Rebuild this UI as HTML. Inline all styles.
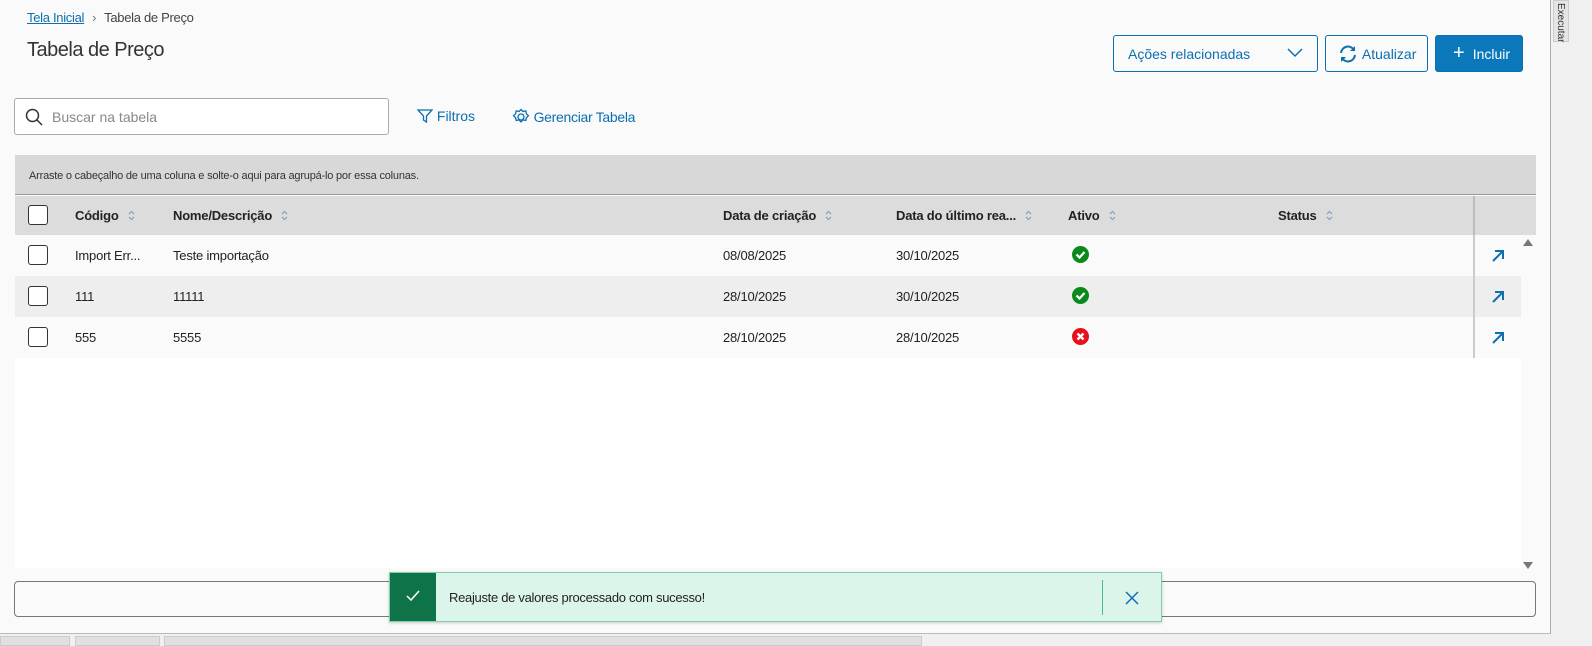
<!DOCTYPE html><html><head><meta charset="utf-8"><style>
*{box-sizing:border-box;margin:0;padding:0}
body{width:1592px;height:646px;overflow:hidden;background:#f0f0f0;font-family:"Liberation Sans",sans-serif;color:#222;position:relative}
.main{position:absolute;left:0;top:0;width:1551px;height:634px;background:#fafafa;border-right:1px solid #aaa;border-bottom:1px solid #bbb}
.abs{position:absolute}
.btn{position:absolute;top:35px;height:37px;border:1px solid #0c6fb1;border-radius:3px;color:#0c6fb1;font-size:14px;display:flex;align-items:center}
.th{position:absolute;top:208px;font-weight:bold;font-size:13px;color:#222;letter-spacing:-0.2px}
.th svg{margin-left:9px;vertical-align:-1px}
.row{position:absolute;left:15px;width:1506px;height:41px;font-size:13px;letter-spacing:-0.2px}
.row span{position:absolute;top:13px}
.cb{position:absolute;left:13px;top:10px;width:20px;height:20px;border:1.5px solid #333;border-radius:3px;background:#fff}
.act{position:absolute;left:1458px;top:0;width:48px;height:41px;border-left:2px solid #ccc}
</style></head><body>
<div class="main">
<div class="abs" style="left:27px;top:10px;font-size:13px;letter-spacing:-0.3px"><span style="color:#0c6fb1;text-decoration:underline">Tela Inicial</span><span style="color:#777;margin:0 8px">›</span><span style="color:#444">Tabela de Preço</span></div>
<div class="abs" style="left:27px;top:39px;font-size:20px;color:#333;letter-spacing:-0.5px">Tabela de Preço</div>
<div class="btn" style="left:1113px;width:205px;padding-left:14px">Ações relacionadas<svg style="position:absolute;right:14px;top:12px" width="16" height="10" viewBox="0 0 16 10"><path d="M1 1l7 7 7-7" fill="none" stroke="#0c6fb1" stroke-width="1.5"/></svg></div>
<div class="btn" style="left:1325px;width:103px;padding-left:12px"><svg width="20" height="18" viewBox="0 0 20 18"><path d="M3 8a7 7 0 0 1 13-3M17 10a7 7 0 0 1-13 3" fill="none" stroke="#0c6fb1" stroke-width="2"/><path d="M17 1v5h-5M3 17v-5h5" fill="#0c6fb1"/></svg>&nbsp;Atualizar</div>
<div class="btn" style="left:1435px;width:88px;background:#0c78bc;color:#fff;padding-left:17px"><span style="font-size:20px;margin-right:8px">+</span>Incluir</div>
<div class="abs" style="left:14px;top:98px;width:375px;height:37px;border:1px solid #aaa;border-radius:3px;background:#fff"><svg class="abs" style="left:10px;top:9px" width="18" height="18" viewBox="0 0 18 18"><circle cx="7.5" cy="7.5" r="6" fill="none" stroke="#333" stroke-width="1.5"/><path d="M12 12l5 5" stroke="#333" stroke-width="1.5"/></svg><span class="abs" style="left:37px;top:10px;font-size:14px;color:#888">Buscar na tabela</span></div>
<div class="abs" style="left:417px;top:108px;font-size:14px;color:#0c6fb1"><svg width="16" height="16" viewBox="0 0 16 16" style="vertical-align:-3px"><path d="M1 2h14l-5.5 6v6l-3-2v-4z" fill="none" stroke="#0c6fb1" stroke-width="1.3"/></svg> Filtros</div>
<div class="abs" style="left:512px;top:108px;font-size:14px;color:#0c6fb1;letter-spacing:-0.3px"><svg width="18" height="18" viewBox="0 0 18 18" style="vertical-align:-4px"><circle cx="9" cy="9" r="3" fill="none" stroke="#0c6fb1" stroke-width="1.3"/><path d="M9 1.5l2 2 2.8-.6.6 2.8 2 2-2 2-.6 2.8-2.8-.6-2 2-2-2-2.8.6-.6-2.8-2-2 2-2 .6-2.8 2.8.6z" fill="none" stroke="#0c6fb1" stroke-width="1.3"/></svg> Gerenciar Tabela</div>
<div class="abs" style="left:15px;top:155px;width:1521px;height:40px;background:#d8d8d8;border-bottom:1px solid #999;font-size:11px;color:#333;padding:15px 0 0 14px;letter-spacing:-0.2px">Arraste o cabeçalho de uma coluna e solte-o aqui para agrupá-lo por essa colunas.</div>
<div class="abs" style="left:15px;top:196px;width:1521px;height:39px;background:#dcdcdc"></div>
<div class="abs" style="left:1473px;top:196px;width:2px;height:162px;background:#bbb"></div>
<div class="cb" style="left:28px;top:205px"></div>
<div class="th" style="left:75px">Código<svg width="7" height="11"><path d="M1 4l2.5-2.5L6 4M1 7l2.5 2.5L6 7" fill="none" stroke="#7a9cc0" stroke-width="1"/></svg></div>
<div class="th" style="left:173px">Nome/Descrição<svg width="7" height="11"><path d="M1 4l2.5-2.5L6 4M1 7l2.5 2.5L6 7" fill="none" stroke="#7a9cc0" stroke-width="1"/></svg></div>
<div class="th" style="left:723px">Data de criação<svg width="7" height="11"><path d="M1 4l2.5-2.5L6 4M1 7l2.5 2.5L6 7" fill="none" stroke="#7a9cc0" stroke-width="1"/></svg></div>
<div class="th" style="left:896px">Data do último rea...<svg width="7" height="11"><path d="M1 4l2.5-2.5L6 4M1 7l2.5 2.5L6 7" fill="none" stroke="#7a9cc0" stroke-width="1"/></svg></div>
<div class="th" style="left:1068px">Ativo<svg width="7" height="11"><path d="M1 4l2.5-2.5L6 4M1 7l2.5 2.5L6 7" fill="none" stroke="#7a9cc0" stroke-width="1"/></svg></div>
<div class="th" style="left:1278px">Status<svg width="7" height="11"><path d="M1 4l2.5-2.5L6 4M1 7l2.5 2.5L6 7" fill="none" stroke="#7a9cc0" stroke-width="1"/></svg></div>
<div class="abs" style="left:15px;top:235px;width:1506px;height:333px;background:#fff"></div>
<div class="row" style="top:235px;background:#fafafa"><div class="cb"></div><span style="left:60px">Import Err...</span><span style="left:158px">Teste importação</span><span style="left:708px">08/08/2025</span><span style="left:881px">30/10/2025</span><svg class="abs" style="left:1057px;top:11px" width="17" height="17"><circle cx="8.5" cy="8.5" r="8.5" fill="#0a8a1a"/><path d="M4.5 8.5l3 3 5-5.5" fill="none" stroke="#fff" stroke-width="2.2"/></svg><div class="act"><svg class="abs" style="left:16px;top:14px" width="14" height="14"><path d="M2 12L12 2M4 2h8v8" fill="none" stroke="#0c6fb1" stroke-width="2"/></svg></div></div>
<div class="row" style="top:276px;background:#eeeeee"><div class="cb"></div><span style="left:60px">111</span><span style="left:158px">11111</span><span style="left:708px">28/10/2025</span><span style="left:881px">30/10/2025</span><svg class="abs" style="left:1057px;top:11px" width="17" height="17"><circle cx="8.5" cy="8.5" r="8.5" fill="#0a8a1a"/><path d="M4.5 8.5l3 3 5-5.5" fill="none" stroke="#fff" stroke-width="2.2"/></svg><div class="act"><svg class="abs" style="left:16px;top:14px" width="14" height="14"><path d="M2 12L12 2M4 2h8v8" fill="none" stroke="#0c6fb1" stroke-width="2"/></svg></div></div>
<div class="row" style="top:317px;background:#fafafa"><div class="cb"></div><span style="left:60px">555</span><span style="left:158px">5555</span><span style="left:708px">28/10/2025</span><span style="left:881px">28/10/2025</span><svg class="abs" style="left:1057px;top:11px" width="17" height="17"><circle cx="8.5" cy="8.5" r="8.5" fill="#e8101a"/><path d="M5.5 5.5l6 6M11.5 5.5l-6 6" stroke="#fff" stroke-width="2.4"/></svg><div class="act"><svg class="abs" style="left:16px;top:14px" width="14" height="14"><path d="M2 12L12 2M4 2h8v8" fill="none" stroke="#0c6fb1" stroke-width="2"/></svg></div></div>
<div class="abs" style="left:1523px;top:239px;width:0;height:0;border:5px solid transparent;border-bottom:7px solid #777;border-top:0"></div>
<div class="abs" style="left:1523px;top:562px;width:0;height:0;border:5px solid transparent;border-top:7px solid #777;border-bottom:0"></div>
<div class="abs" style="left:14px;top:581px;width:1522px;height:36px;border:1px solid #777;border-radius:4px;background:#fafafa"></div>
<div class="abs" style="left:389px;top:572px;width:773px;height:50px;background:#dcf5ea;border:1px solid #7fd1ad;box-shadow:0 1px 3px rgba(0,0,0,.2)">
<div class="abs" style="left:0;top:0;width:46px;height:48px;background:#0f7349"><svg class="abs" style="left:16px;top:17px" width="14" height="12"><path d="M1 6l4 4 8-9" fill="none" stroke="#fff" stroke-width="1.5"/></svg></div>
<span class="abs" style="left:59px;top:17px;font-size:13px;color:#222;letter-spacing:-0.3px">Reajuste de valores processado com sucesso!</span>
<div class="abs" style="left:712px;top:7px;width:1px;height:35px;background:#4fb98a"></div>
<svg class="abs" style="left:735px;top:18px" width="14" height="14"><path d="M1 1l12 12M13 1L1 13" stroke="#0c6fb1" stroke-width="1.5"/></svg>
</div>
</div>
<div class="abs" style="left:1553px;top:0;width:16px;height:42px;background:#e4e4e4;border:1px solid #ccc"><span class="abs" style="left:1px;top:2px;writing-mode:vertical-rl;font-size:10px;color:#333">Executar</span></div>
<div class="abs" style="left:0;top:636px;width:70px;height:10px;background:#e0e0e0;border:1px solid #ccc"></div>
<div class="abs" style="left:75px;top:636px;width:85px;height:10px;background:#e0e0e0;border:1px solid #ccc"></div>
<div class="abs" style="left:164px;top:636px;width:758px;height:10px;background:#e0e0e0;border:1px solid #ccc"></div>
</body></html>
